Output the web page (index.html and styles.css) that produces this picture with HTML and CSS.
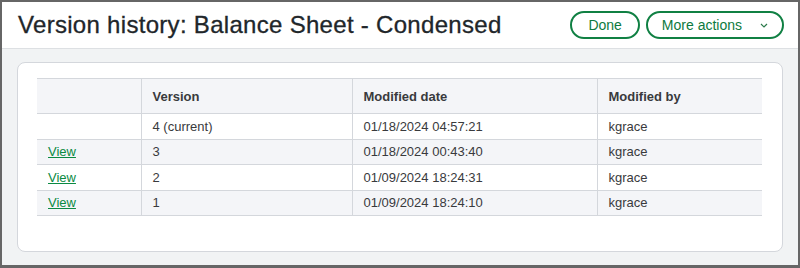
FILE: index.html
```html
<!DOCTYPE html>
<html>
    <head>
        <link rel="stylesheet" href="styles.css">
        <title>Version history</title>
    </head>
    <body>
        <div class="frame">
            <div class="header">
                <h1 class="title">Version history: Balance Sheet - Condensed</h1>
                <div class="actions">
                    <button class="pill">Done</button>
                    <button class="pill more">More actions
                        <svg class="chevron" width="8" height="5" viewBox="0 0 8 5"><path d="M1 1l3 3 3-3" fill="none" stroke="#2b7a4b" stroke-width="1.2"/></svg>
                    </button>
                </div>
            </div>
            <div class="content">
                <div class="card">
                    <table class="versions">
                        <colgroup>
                            <col class="c1"><col class="c2"><col class="c3"><col class="c4">
                        </colgroup>
                        <thead>
                            <tr><th></th><th>Version</th><th>Modified date</th><th>Modified by</th></tr>
                        </thead>
                        <tbody>
                            <tr><td></td><td>4 (current)</td><td>01/18/2024 04:57:21</td><td>kgrace</td></tr>
                            <tr><td><a href="#">View</a></td><td>3</td><td>01/18/2024 00:43:40</td><td>kgrace</td></tr>
                            <tr><td><a href="#">View</a></td><td>2</td><td>01/09/2024 18:24:31</td><td>kgrace</td></tr>
                            <tr><td><a href="#">View</a></td><td>1</td><td>01/09/2024 18:24:10</td><td>kgrace</td></tr>
                        </tbody>
                    </table>
                </div>
            </div>
        </div>
    </body>
</html>
```

FILE: styles.css
```css
body {
    margin: 0;
    font-family: "Liberation Sans", Arial, sans-serif;
}
.frame {
    height: 268px;
    box-sizing: border-box;
    border: 2px solid #666666;
    border-bottom-width: 3px;
    background: #f1f3f4;
}
.header {
    height: 46px;
    background: #ffffff;
    border-bottom: 1px solid #dde0e3;
    display: flex;
    align-items: center;
    justify-content: space-between;
    padding: 0 14px 0 16px;
}
.title {
    margin: 0;
    font-size: 24px;
    font-weight: normal;
    letter-spacing: 0.3px;
    color: #21262a;
    -webkit-text-stroke: 0.3px #21262a;
}
.actions {
    display: flex;
    gap: 6px;
}
.pill {
    height: 28px;
    box-sizing: border-box;
    border: 2px solid #108043;
    border-radius: 14px;
    background: #ffffff;
    color: #0d7a40;
    font-family: "Liberation Sans", Arial, sans-serif;
    font-size: 14px;
    padding: 0 16px;
    display: flex;
    align-items: center;
}
.more {
    padding: 0 14px 0 14px;
}
.chevron {
    margin-left: 18px;
}
.content {
    padding: 13px 15px 14px 15px;
}
.card {
    background: #ffffff;
    border: 1px solid #d4d7dc;
    border-radius: 8px;
    padding: 15px 20px 35px 19px;
}
.versions {
    border-collapse: collapse;
    width: 725px;
    table-layout: fixed;
    font-size: 13px;
    color: #393a3d;
}
.c1 { width: 104px; }
.c2 { width: 211px; }
.c3 { width: 245px; }
.c4 { width: 165px; }
.versions th,
.versions td {
    text-align: left;
    padding: 0 11px;
    border-top: 1px solid #d4d7dc;
    border-bottom: 1px solid #d4d7dc;
    border-left: 1px solid #d4d7dc;
}
.versions th:first-child,
.versions td:first-child {
    border-left: none;
}
.versions th {
    height: 34px;
    background: #f4f5f8;
    font-weight: bold;
    color: #393a3d;
}
.versions td {
    height: 24.5px;
}
.versions tbody tr:nth-child(even) td {
    background: #f4f5f8;
}
.versions a {
    color: #0b8a43;
    text-decoration: underline;
}
```
